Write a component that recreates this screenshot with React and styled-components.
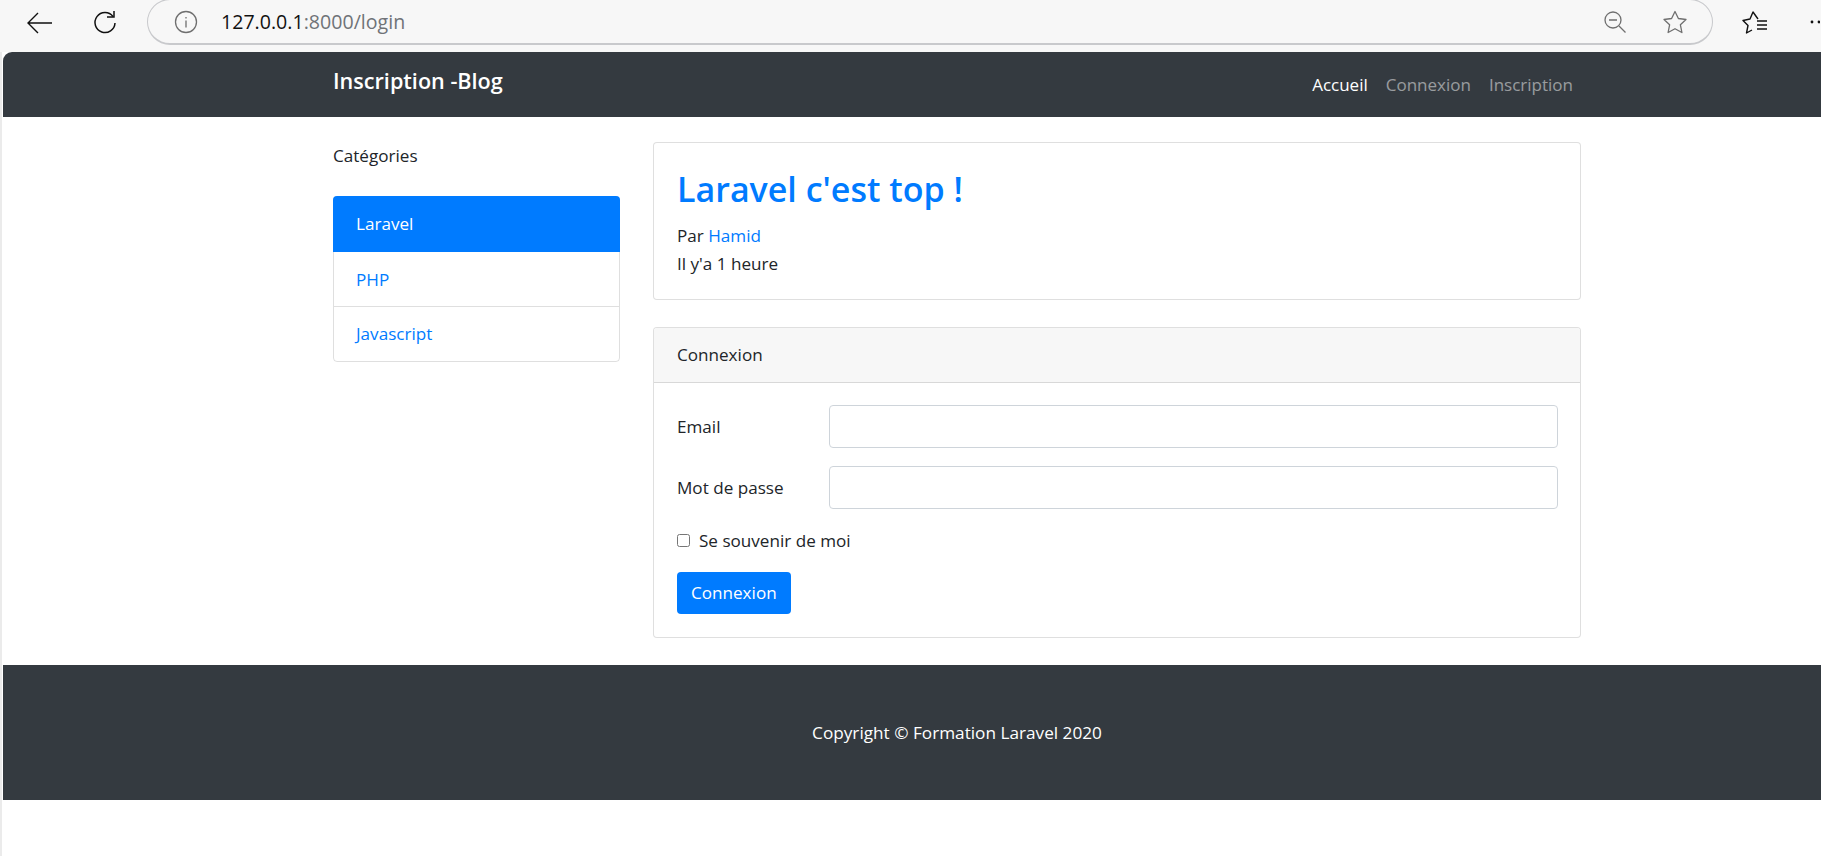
import React from "react";
import styled, { createGlobalStyle } from "styled-components";

const Global = createGlobalStyle`
  html, body { margin: 0; padding: 0; background: #fff; }
  body {
    font-family: "Open Sans", "Noto Sans", "Liberation Sans", sans-serif;
    font-size: 17.1px;
    line-height: 24px;
    color: #212529;
    overflow: hidden;
  }
  * { box-sizing: border-box; }
`;

const Page = styled.div`
  width: 1821px;
  height: 856px;
  display: flex;
  flex-direction: column;
  background: #fff;
`;

const Chrome = styled.header`
  height: 52px;
  background: #f7f7f7;
  display: flex;
  align-items: flex-start;
  padding-left: 24px;
  flex: none;
`;

const ChromeButton = styled.button`
  width: 32px;
  height: 32px;
  margin: 7px 0 0 ${p => p.$gap || 0}px;
  padding: 0;
  border: 0;
  background: none;
  display: flex;
  align-items: center;
  justify-content: center;
  flex: none;
`;

const AddressBar = styled.div`
  width: 1566px;
  height: 46px;
  margin: -1px 0 0 26px;
  padding: 0 24px 0 26px;
  border: 1px solid #c8c9cc;
  border-bottom-width: 2px;
  border-radius: 24px;
  display: flex;
  align-items: center;
  background: #f7f7f7;
  flex: none;
`;

const Url = styled.div`
  margin-left: 23px;
  font-size: 19.6px;
  color: #6f7377;
  flex: 1;
  b { font-weight: 400; color: #111; }
`;

const BarIcon = styled.span`
  display: flex;
  margin-left: ${p => p.$gap || 0}px;
  margin-top: ${p => p.$top || 0}px;
`;

const Shell = styled.div`
  flex: 1;
  display: flex;
  flex-direction: column;
  border-left: 2px solid #ebebeb;
  padding-left: 1px;
`;

const NavBar = styled.nav`
  height: 65px;
  background: #343a40;
  border-top-left-radius: 9px;
  flex: none;
`;

const Wrap = styled.div`
  width: 1248px;
  margin-left: 330px;
`;

const NavInner = styled(Wrap)`
  height: 100%;
  display: flex;
  justify-content: space-between;
  align-items: flex-start;
`;

const Brand = styled.a`
  margin-top: 14px;
  font-size: 21.6px;
  line-height: 30px;
  font-weight: 600;
  color: #fff;
`;

const NavLinks = styled.div`
  display: flex;
  gap: 18px;
  margin-top: 21px;
  margin-right: 8px;
  font-size: 17px;
`;

const NavLink = styled.a`
  color: ${p => (p.$active ? "#fff" : "rgba(255,255,255,.5)")};
`;

const Main = styled(Wrap)`
  display: grid;
  grid-template-columns: 287px 928px;
  column-gap: 33px;
  padding-top: 25px;
  height: 548px;
  flex: none;
`;

const Side = styled.aside``;

const SideTitle = styled.div`
  margin-top: 2px;
  margin-bottom: 28px;
`;

const ListGroup = styled.div`
  border: 1px solid rgba(0,0,0,.125);
  border-radius: 4px;
`;

const ListItem = styled.a`
  display: block;
  height: ${p => p.$h}px;
  padding: ${p => p.$top}px 22px 0 ${p => (p.$active ? 23 : 22)}px;
  margin: ${p => (p.$active ? "-1px -1px 0" : 0)};
  border-radius: ${p => (p.$active ? "4px 4px 0 0" : 0)};
  background: ${p => (p.$active ? "#007bff" : "transparent")};
  color: ${p => (p.$active ? "#fff" : "#007bff")};
  border-top: ${p => (p.$divider ? "1px solid rgba(0,0,0,.125)" : "0")};
`;

const Card = styled.section`
  border: 1px solid rgba(0,0,0,.125);
  border-radius: 4px;
  background: #fff;
  margin-bottom: 27px;
  overflow: hidden;
`;

const PostBody = styled.div`
  padding: 27px 23px 0;
  height: 156px;
`;

const PostTitle = styled.h1`
  margin: 0 0 14px;
  font-size: 34px;
  line-height: 38px;
  font-weight: 600;
  color: #007bff;
`;

const Meta = styled.div`
  line-height: 27.5px;
`;

const MetaLink = styled.a`
  color: #007bff;
`;

const CardHead = styled.div`
  height: 55px;
  padding: 15px 23px 0;
  background: #f7f7f7;
  border-bottom: 1px solid rgba(0,0,0,.125);
`;

const CardBody = styled.form`
  padding: 22px 22px 23px 23px;
`;

const Row = styled.div`
  display: flex;
  align-items: center;
  margin-bottom: ${p => p.$after}px;
`;

const Label = styled.label`
  width: 152px;
  flex: none;
`;

const Input = styled.input`
  flex: 1;
  height: 43px;
  border: 1px solid #ced4da;
  border-radius: 4px;
  background: #fff;
  min-width: 0;
`;

const CheckRow = styled.label`
  display: flex;
  align-items: center;
  margin-bottom: 19px;
  height: 24px;
`;

const Check = styled.input`
  width: 13px;
  height: 13px;
  margin: 0 9px 2px 0;
`;

const Submit = styled.button`
  display: block;
  height: 42px;
  padding: 0 14px;
  border: 0;
  border-radius: 4px;
  background: #007bff;
  color: #fff;
  font: inherit;
`;

const Footer = styled.footer`
  height: 135px;
  padding-left: 90px;
  background: #343a40;
  color: #fff;
  display: flex;
  align-items: center;
  justify-content: center;
  flex: none;
  font-size: 17.2px;
`;

const BackIcon = () => (
  <svg width="30" height="24" viewBox="0 0 30 24" fill="none" stroke="#111" strokeWidth="1.4"><path d="M3 12h24M13 2 3 12l10 10" /></svg>
);
const ReloadIcon = () => (
  <svg width="26" height="26" viewBox="0 0 26 26" fill="none" stroke="#111" strokeWidth="1.5"><path d="M21 6.500A10 10 0 1 0 23 13" /><path d="M15 7h7V1" /></svg>
);
const InfoIcon = () => (
  <svg width="24" height="24" viewBox="0 0 24 24" fill="none" stroke="#6f6f6f" strokeWidth="1.3"><circle cx="12" cy="12" r="10.500" /><path d="M12 10.500v7M12 7v1.600" /></svg>
);
const ZoomIcon = () => (
  <svg width="24" height="24" viewBox="0 0 24 24" fill="none" stroke="#6f6f6f" strokeWidth="1.3"><circle cx="10" cy="10" r="8" /><path d="M6 10h8M16 16l6.500 6.500" /></svg>
);
const StarIcon = () => (
  <svg width="26" height="24" viewBox="0 0 26 24" fill="none" stroke="#6f6f6f" strokeWidth="1.3" strokeLinejoin="round"><path d="m13 1.500 3.400 7 7.600 1-5.600 5.300 1.500 7.700-6.900-3.800-6.900 3.800 1.500-7.700L2 9.500l7.600-1z" /></svg>
);
const FavIcon = () => (
  <svg width="26" height="24" viewBox="0 0 26 24" fill="none" stroke="#111" strokeWidth="1.4" strokeLinejoin="round"><path d="M16 8 11 1 8 8l-7 1.500 5 5-1.500 7.500 5.500-3" /><path d="M15 10h10M15 14h10M15 18h10" /></svg>
);
const MoreIcon = () => (
  <svg width="10" height="6" viewBox="0 0 10 6" fill="#111"><circle cx="2" cy="3" r="1.400" /><circle cx="9" cy="3" r="1.400" /></svg>
);

export default function App() {
  return (
    <Page>
      <Global />
      <Chrome>
        <ChromeButton><BackIcon /></ChromeButton>
        <ChromeButton $gap={33}><ReloadIcon /></ChromeButton>
        <AddressBar>
          <InfoIcon />
          <Url><b>127.0.0.1</b>:8000/login</Url>
          <BarIcon><ZoomIcon /></BarIcon>
          <BarIcon $gap={35}><StarIcon /></BarIcon>
        </AddressBar>
        <BarIcon $gap={29} $top={11}><FavIcon /></BarIcon>
        <BarIcon $gap={42} $top={19}><MoreIcon /></BarIcon>
      </Chrome>
      <Shell>
        <NavBar>
          <NavInner>
            <Brand>Inscription -Blog</Brand>
            <NavLinks>
              <NavLink $active>Accueil</NavLink>
              <NavLink>Connexion</NavLink>
              <NavLink>Inscription</NavLink>
            </NavLinks>
          </NavInner>
        </NavBar>
        <Main>
          <Side>
            <SideTitle>Catégories</SideTitle>
            <ListGroup>
              <ListItem $active $h={56} $top={16}>Laravel</ListItem>
              <ListItem $h={54} $top={16}>PHP</ListItem>
              <ListItem $divider $h={55} $top={15}>Javascript</ListItem>
            </ListGroup>
          </Side>
          <div>
            <Card>
              <PostBody>
                <PostTitle>Laravel c'est top !</PostTitle>
                <Meta>Par <MetaLink>Hamid</MetaLink></Meta>
                <Meta>Il y'a 1 heure</Meta>
              </PostBody>
            </Card>
            <Card>
              <CardHead>Connexion</CardHead>
              <CardBody>
                <Row $after={18}><Label>Email</Label><Input /></Row>
                <Row $after={20}><Label>Mot de passe</Label><Input /></Row>
                <CheckRow><Check type="checkbox" />Se souvenir de moi</CheckRow>
                <Submit type="button">Connexion</Submit>
              </CardBody>
            </Card>
          </div>
        </Main>
        <Footer>Copyright © Formation Laravel 2020</Footer>
      </Shell>
    </Page>
  );
}
